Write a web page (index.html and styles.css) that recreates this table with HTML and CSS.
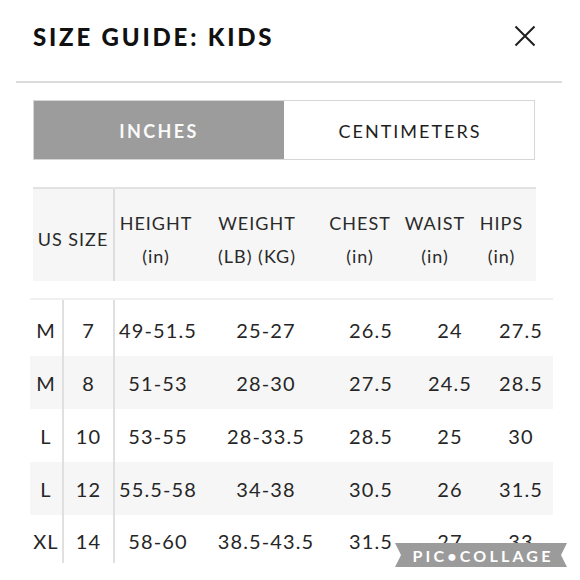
FILE: index.html
```html
<!DOCTYPE html>
<html lang="en">
<head>
<meta charset="utf-8">
<title>Size Guide: Kids</title>
<link rel="stylesheet" href="styles.css">
</head>
<body>
<div class="page">
  <header class="top">
    <h1 class="title">SIZE GUIDE: KIDS</h1>
    <button class="close" aria-label="Close">
      <svg width="22" height="22" viewBox="0 0 22 22"><path d="M1.5 1.5 L20.5 20.5 M20.5 1.5 L1.5 20.5" stroke="#1e1e1e" stroke-width="2" fill="none"/></svg>
    </button>
  </header>
  <div class="rule"></div>
  <div class="tabs">
    <div class="tab active">INCHES</div>
    <div class="tab">CENTIMETERS</div>
  </div>
  <div class="thead">
    <div class="th first">US SIZE</div>
    <div class="th left-line">HEIGHT<br>(in)</div>
    <div class="th">WEIGHT<br>(LB) (KG)</div>
    <div class="th">CHEST<br>(in)</div>
    <div class="th">WAIST<br>(in)</div>
    <div class="th">HIPS<br>(in)</div>
  </div>
  <div class="tbody">
    <div class="tr r1"><div class="td">M</div><div class="td ln">7</div><div class="td ln">49-51.5</div><div class="td">25-27</div><div class="td">26.5</div><div class="td">24</div><div class="td">27.5</div></div>
    <div class="tr stripe"><div class="td">M</div><div class="td ln">8</div><div class="td ln">51-53</div><div class="td">28-30</div><div class="td">27.5</div><div class="td">24.5</div><div class="td">28.5</div></div>
    <div class="tr"><div class="td">L</div><div class="td ln">10</div><div class="td ln">53-55</div><div class="td">28-33.5</div><div class="td">28.5</div><div class="td">25</div><div class="td">30</div></div>
    <div class="tr stripe"><div class="td">L</div><div class="td ln">12</div><div class="td ln">55.5-58</div><div class="td">34-38</div><div class="td">30.5</div><div class="td">26</div><div class="td">31.5</div></div>
    <div class="tr last"><div class="td">XL</div><div class="td ln">14</div><div class="td ln">58-60</div><div class="td">38.5-43.5</div><div class="td">31.5</div><div class="td">27</div><div class="td">33</div></div>
  </div>
  <div class="ribbon">
    <svg class="ribbon-bg" width="172" height="24" viewBox="0 0 172 24"><polygon points="0,0 172,0 166,12 172,24 0,24 6,12" fill="#9b9b9b"/></svg>
    <span class="ribbon-text">PIC•COLLAGE</span>
  </div>
</div>
</body>
</html>
```
FILE: styles.css
```css
* { box-sizing: border-box; }
html, body { margin: 0; padding: 0; background: #fff; }
body {
  font-family: "Lato", "Noto Sans", sans-serif;
  color: #262626;
  width: 580px;
  height: 580px;
  overflow: hidden;
}
.page { position: relative; width: 580px; height: 580px; }

.top {
  display: flex;
  justify-content: space-between;
  align-items: center;
  height: 76px;
  padding: 0 44px 4px 33px;
}
.title {
  margin: 0;
  font-size: 24px;
  font-weight: 900;
  letter-spacing: 2.8px;
  color: #111;
}
.close {
  border: 0;
  background: none;
  padding: 0;
  width: 22px;
  height: 22px;
  display: flex;
}

.rule {
  margin: 5px 18px 0 16px;
  height: 2px;
  background: #dcdcdc;
}

.tabs {
  display: flex;
  margin: 17px 45px 0 33px;
  height: 60px;
  border: 1px solid #d6d6d6;
}
.tab {
  flex: 0 0 250px;
  display: flex;
  align-items: center;
  justify-content: center;
  font-size: 18px;
  letter-spacing: 2px;
  color: #1e1e1e;
  padding-top: 1px;
}
.tab + .tab { flex: 1 1 auto; padding-left: 2px; }
.tab.active {
  background: #9c9c9c;
  color: #fafafa;
  font-weight: 700;
  letter-spacing: 2.4px;
}

.thead {
  display: grid;
  grid-template-columns: 80px 84px 120px 86px 64px 69px;
  margin: 27px 0 0 33px;
  width: 503px;
  height: 94px;
  background: #f6f6f6;
  border-top: 2px solid #e2e2e2;
}
.th {
  display: flex;
  align-items: center;
  justify-content: center;
  text-align: center;
  font-size: 18px;
  line-height: 33px;
  letter-spacing: 1px;
  color: #2a2a2a;
  padding-top: 9px;
}
.th.first { padding-left: 0; letter-spacing: 1px; }
.th.left-line { border-left: 2px solid #dedede; }

.tbody {
  margin: 17px 0 0 30px;
  width: 523px;
  border-top: 2px solid #f0f0f0;
}
.tr {
  display: grid;
  grid-template-columns: 32px 51px 88px 130px 80px 78px 64px;
  height: 53px;
}
.tr.r1 { height: 56px; }
.tr.last { height: 48px; }
.tr.stripe { background: #f6f6f6; }
.td {
  display: flex;
  align-items: center;
  justify-content: center;
  font-size: 20px;
  letter-spacing: 1.1px;
  color: #262626;
}
.tr.r1 .td { padding-top: 3px; }
.tr.last .td { padding-top: 4px; }
.td.ln { border-left: 2px solid #e0e0e0; }

.ribbon {
  position: absolute;
  left: 395px;
  top: 543px;
  width: 172px;
  height: 24px;
  display: flex;
  align-items: center;
  justify-content: center;
}
.ribbon-bg { position: absolute; left: 0; top: 0; }
.ribbon-text {
  position: relative;
  color: #fff;
  font-size: 16px;
  font-weight: 700;
  letter-spacing: 3.2px;
  padding-left: 4px;
}
```
